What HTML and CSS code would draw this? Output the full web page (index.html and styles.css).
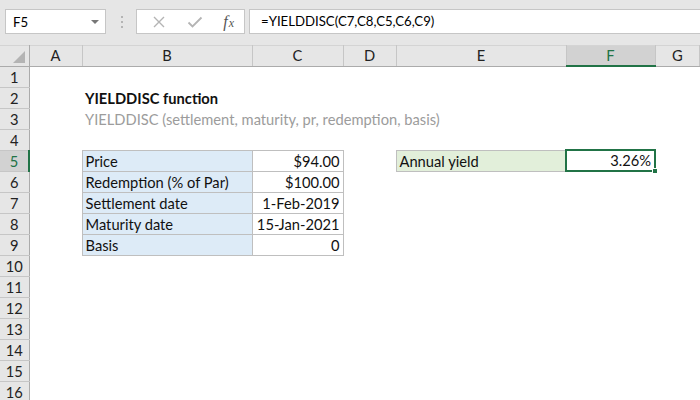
FILE: index.html
```html
<!DOCTYPE html>
<html lang="en-US">

<head>
	<title>YIELDDISC function</title>
	<meta charset="utf-8">
	<link rel="stylesheet" href="styles.css">
</head>

<body>
	<div class="toolbar">
		<div class="namebox">
			<span>F5</span>
			<span class="arrow"></span>
		</div>
		<div class="dots">
			<i></i><i></i><i></i>
		</div>
		<div class="buttons">
			<svg width="14" height="14" viewBox="0 0 14 14"><path d="M2 2 L12 12 M12 2 L2 12" stroke="#b4b4b4" stroke-width="1.4" fill="none"/></svg>
			<svg width="16" height="14" viewBox="0 0 16 14"><path d="M1.5 7.5 L5.5 11.5 L14.5 2.5" stroke="#b4b4b4" stroke-width="1.8" fill="none"/></svg>
			<span class="fx"><i>f</i><i class="x">x</i></span>
		</div>
		<div class="formula">=YIELDDISC(C7,C8,C5,C6,C9)</div>
	</div>

	<table class="sheet">
		<colgroup>
			<col class="c-rh">
			<col class="c-a">
			<col class="c-b">
			<col class="c-c">
			<col class="c-d">
			<col class="c-e">
			<col class="c-f">
			<col>
		</colgroup>
		<tr class="colheads">
			<th class="corner"><span class="tri"></span></th>
			<th>A</th><th>B</th><th>C</th><th>D</th><th>E</th><th class="active">F</th><th>G</th>
		</tr>
		<tr><th>1</th><td></td><td></td><td></td><td></td><td></td><td></td><td></td></tr>
		<tr><th>2</th><td></td><td class="title">YIELDDISC function</td><td></td><td></td><td></td><td></td><td></td></tr>
		<tr><th>3</th><td></td><td class="syntax" colspan="4">YIELDDISC (settlement, maturity, pr, redemption, basis)</td><td></td><td></td></tr>
		<tr><th>4</th><td></td><td></td><td></td><td></td><td></td><td></td><td></td></tr>
		<tr>
			<th class="active">5</th><td></td>
			<td class="label">Price</td><td class="value">$94.00</td>
			<td></td>
			<td class="result-label">Annual yield</td>
			<td class="selected">3.26%<span class="handle"></span></td>
			<td></td>
		</tr>
		<tr><th>6</th><td></td><td class="label">Redemption (% of Par)</td><td class="value">$100.00</td><td></td><td></td><td></td><td></td></tr>
		<tr><th>7</th><td></td><td class="label">Settlement date</td><td class="value">1-Feb-2019</td><td></td><td></td><td></td><td></td></tr>
		<tr><th>8</th><td></td><td class="label">Maturity date</td><td class="value">15-Jan-2021</td><td></td><td></td><td></td><td></td></tr>
		<tr><th>9</th><td></td><td class="label">Basis</td><td class="value">0</td><td></td><td></td><td></td><td></td></tr>
		<tr><th>10</th><td></td><td></td><td></td><td></td><td></td><td></td><td></td></tr>
		<tr><th>11</th><td></td><td></td><td></td><td></td><td></td><td></td><td></td></tr>
		<tr><th>12</th><td></td><td></td><td></td><td></td><td></td><td></td><td></td></tr>
		<tr><th>13</th><td></td><td></td><td></td><td></td><td></td><td></td><td></td></tr>
		<tr><th>14</th><td></td><td></td><td></td><td></td><td></td><td></td><td></td></tr>
		<tr><th>15</th><td></td><td></td><td></td><td></td><td></td><td></td><td></td></tr>
		<tr><th>16</th><td></td><td></td><td></td><td></td><td></td><td></td><td></td></tr>
	</table>
</body>
</html>
```

FILE: styles.css
```css
html, body {
	padding: 0;
	margin: 0;
	background: #fff;
	color: #000;
	font-family: Lato, "Open Sans", sans-serif;
	font-size: 13.2px;
	overflow: hidden;
}

*, *:before, *:after {
	box-sizing: border-box;
}

.toolbar {
	display: flex;
	align-items: center;
	height: 45px;
	padding: 0 0 2px 5px;
	background: #e6e6e6;
}

.namebox {
	display: flex;
	align-items: center;
	justify-content: space-between;
	width: 101px;
	height: 25px;
	padding: 0 6px 0 7px;
	background: #fff;
	border: 1px solid #c6c6c6;
}

.namebox .arrow {
	width: 0;
	height: 0;
	border-left: 4px solid transparent;
	border-right: 4px solid transparent;
	border-top: 4px solid #777;
}

.dots {
	display: flex;
	flex-direction: column;
	gap: 3px;
	margin: 0 13px 0 15px;
}

.dots i {
	display: block;
	width: 2px;
	height: 2px;
	background: #b4b4b4;
}

.buttons {
	display: flex;
	align-items: center;
	justify-content: space-between;
	width: 109px;
	height: 25px;
	padding: 0 10px 0 15px;
	background: #fff;
	border: 1px solid #c6c6c6;
}

.fx {
	font-family: "Liberation Serif", serif;
	font-size: 16px;
	color: #555;
}

.fx .x {
	font-size: 12px;
	margin-left: 1px;
}

.formula {
	flex-grow: 1;
	height: 25px;
	margin-left: 4px;
	padding: 3px 0 0 11px;
	background: #fff;
	border: 1px solid #c6c6c6;
	border-right: none;
	white-space: nowrap;
}

.sheet {
	border-collapse: collapse;
	table-layout: fixed;
	width: 700px;
	font-size: 14.7px;
	color: #111;
}

.c-rh { width: 29px; }
.c-a { width: 53px; }
.c-b { width: 170px; }
.c-c { width: 91px; }
.c-d { width: 53px; }
.c-e { width: 170px; }
.c-f { width: 89px; }

.sheet tr {
	height: 21px;
}

.sheet tr.colheads {
	height: 20px;
}

.sheet th {
	padding: 0;
	font-weight: normal;
	background: #e6e6e6;
	color: #222;
	border-right: 1px solid #c6c6c6;
	border-bottom: 1px solid #c6c6c6;
	text-align: center;
	vertical-align: bottom;
	line-height: 19px;
}

.colheads th {
	border-top: 1px solid #d4d4d4;
	border-bottom: 1px solid #ababab;
	vertical-align: middle;
}

.sheet tr th:first-child {
	border-right: 1px solid #ababab;
}

.colheads th.active {
	background: #d2d2d2;
	color: #217346;
	border-bottom: 2px solid #217346;
}

.sheet tr th.active:first-child {
	background: #d2d2d2;
	color: #217346;
	border-right: 2px solid #217346;
}

.corner {
	position: relative;
}

.corner .tri {
	position: absolute;
	right: 4px;
	bottom: 3px;
	width: 0;
	height: 0;
	border-left: 12px solid transparent;
	border-bottom: 12px solid #b4b4b4;
}

.sheet td {
	padding: 0 3px;
	white-space: nowrap;
	overflow: visible;
	vertical-align: bottom;
	line-height: 19px;
}

.title {
	font-weight: bold;
}

.syntax {
	color: #9c9c9c;
}

.label {
	background: #ddebf7;
	border: 1px solid #bfbfbf;
}

.value {
	text-align: right;
	border: 1px solid #bfbfbf;
}

.result-label {
	background: #e2efda;
	border: 1px solid #bfbfbf;
}

.selected {
	position: relative;
	text-align: right;
	border: 2px solid #217346;
}

.selected .handle {
	position: absolute;
	right: -4px;
	bottom: -4px;
	width: 6px;
	height: 6px;
	background: #217346;
	border: 1px solid #fff;
}
```
